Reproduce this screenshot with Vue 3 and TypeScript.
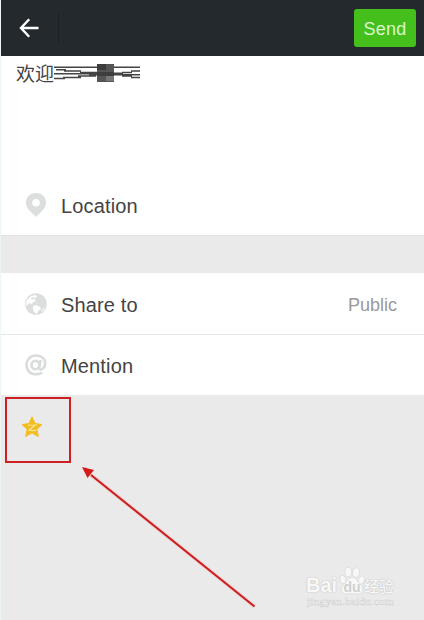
<script setup lang="ts">
import { ref } from 'vue'

const message = ref('欢迎')
const audience = ref('Public')
</script>

<template>
  <main class="screen">
    <header class="bar">
      <button class="back" aria-label="Back">
        <svg width="20" height="20" viewBox="0 0 20 20" fill="none" stroke="#fff" stroke-width="2.4">
          <path d="M10.2 1.3 2 10l8.2 8.7M2 10h17.5" />
        </svg>
      </button>
      <button class="send">Send</button>
    </header>

    <section class="composer">
      <div class="message">
        <span>{{ message }}</span>
        <svg class="scribble" width="87" height="20" viewBox="0 0 87 20">
          <g stroke="#444" stroke-width="1.5">
            <path d="M1 4.2h86M1 10.7h60" />
            <path d="M3 6.7h10M11 8h17M27 9.5h18" />
            <path d="M1 15.5h11M10 14.4h18M25 13h18M36 11.8h24" />
            <path d="M60 10.2h10M61 11.7h26M69 9.5h10M78 8h9M69 13h10M78 14.6h9" />
          </g>
          <path fill="#555" d="M44 1h17v18H44z" />
          <path fill="#3d3d3d" d="M44 1h9v6h-9zM44 9h17v4H44z" />
          <path fill="#777" d="M53 13h8v5h-8z" />
        </svg>
      </div>
      <div class="row location">
        <svg class="icon" width="24" height="26" viewBox="0 0 24 26">
          <path fill="#dcdede" fill-rule="evenodd" d="M12 1C6 1 2 5 2 10.7 2 17 8.5 21 12 25c3.5-4 10-8 10-14.3C22 5 18 1 12 1Zm0 6a3.8 3.8 0 1 1 0 7.6A3.8 3.8 0 0 1 12 7Z" />
        </svg>
        <span class="label">Location</span>
      </div>
    </section>

    <section class="options">
      <div class="row share">
        <svg class="icon" width="24" height="24" viewBox="0 0 24 24">
          <circle cx="12" cy="12" r="10.8" fill="#dcdede" />
          <path fill="#fff" d="m3 8 4-4 5-1 1 2-3 2 2 2-3 1-1 2-3-1-2 3-1-2Z" />
          <path fill="#fff" d="m9 14 3-1 4 2 1 2-3 2-1 3-3-2-1-3Z" />
          <path fill="#dcdede" d="m7 6 3-1 1 1-3 2Z" />
          <path fill="#fff" d="m19 17 2-1-2 3-2 1Z" />
        </svg>
        <span class="label">Share to</span>
        <span class="value">{{ audience }}</span>
      </div>
      <div class="row mention">
        <svg class="icon" width="24" height="24" viewBox="0 0 24 24" fill="none" stroke="#dadcdc" stroke-width="2.6">
          <ellipse cx="11.4" cy="12" rx="3.9" ry="4.2" transform="rotate(15 11.4 12)" />
          <path d="m16.6 7-1.3 7.2c-.2 2 1 2.5 2.5 2 2-.8 3.4-2.8 3.4-5.6 0-4.8-3.8-8.1-9.1-8.1-5.6 0-9.6 4-9.6 9.6 0 5.5 3.8 9.2 9.4 9.2 2.5 0 4.5-.6 6.3-1.7" />
        </svg>
        <span class="label">Mention</span>
      </div>
    </section>

    <section class="services">
      <div class="highlight">
        <svg width="24" height="24" viewBox="0 0 24 24">
          <path fill="#f3bd22" stroke="#f3bd22" stroke-width="1" stroke-linejoin="round" d="m12 1.8 3.1 6.8 6.9.9-5.1 4.8 1.5 7.2-6.4-3.6-6.4 3.6 1.5-7.2L2 9.5l6.9-.9Z" />
          <path fill="none" stroke="#ffe696" stroke-width="1.2" d="M8 10c3 .4 5.4.3 7.5 0l-6.5 5.2c3 .5 5.3.5 7.5 0" />
        </svg>
      </div>
    </section>

    <svg class="pointer" width="180" height="148" viewBox="0 0 180 148">
      <path d="m10 8 163.5 131.5" fill="none" stroke="#f5cfce" stroke-width="3.6" />
      <path d="m10 8 163.5 131.5" fill="none" stroke="#c91f20" stroke-width="2" />
      <path d="m1 0 12 3-6.5 8Z" fill="#d71919" />
    </svg>

    <div class="watermark">
      <div class="brand">
        <span class="latin">Bai</span>
        <span class="paw">
          <svg width="26" height="30" viewBox="0 0 26 30" fill="#f8f8f8" stroke="#d3d3d3" stroke-width=".6">
            <ellipse cx="3.9" cy="13.5" rx="3" ry="4.2" transform="rotate(-15 3.9 13.5)" />
            <ellipse cx="9.3" cy="6" rx="3.4" ry="4.7" />
            <ellipse cx="17.1" cy="6.5" rx="3.4" ry="4.7" transform="rotate(10 17.1 6.5)" />
            <ellipse cx="22.4" cy="14" rx="3" ry="4.2" transform="rotate(15 22.4 14)" />
            <path d="M13 11.5c4 0 5.5 4 8.5 7 4 4 2 9.5-2 9.5-3 0-9-.6-12.5 0-5 0-6-6-2-9.5 3-3 4-7 8-7Z" />
          </svg>
          <span class="du">du</span>
        </span>
        <span class="cjk">经验</span>
      </div>
      <svg class="site" width="92" height="13" viewBox="0 0 92 13">
        <text x="1" y="9" font-size="11" textLength="87" lengthAdjust="spacingAndGlyphs">jingyan.baidu.com</text>
      </svg>
    </div>
  </main>
</template>

<style>
body {
  margin: 0;
}
</style>

<style scoped>
.screen {
  position: relative;
  box-sizing: border-box;
  width: 424px;
  height: 620px;
  overflow: hidden;
  border-left: 1px solid #edf5f7;
  background: #eaeaea;
  color: #444;
  font-family: "Liberation Sans", "Noto Sans CJK SC", sans-serif;
}

button {
  border: 0;
  padding: 0;
  background: none;
}

.bar {
  display: flex;
  align-items: center;
  justify-content: space-between;
  box-sizing: border-box;
  height: 56px;
  padding-right: 8px;
  background: #23292c;
}

.back {
  display: flex;
  align-items: center;
  width: 58px;
  height: 30px;
  padding-left: 18px;
  border-right: 1px solid #1b2022;
}

.send {
  width: 62px;
  height: 38px;
  padding-top: 2px;
  border-radius: 3px;
  background: #45bf1c;
  color: #d9f8cf;
  font: 18px "Liberation Sans", sans-serif;
  letter-spacing: 0.2px;
}

.composer {
  display: flex;
  flex-direction: column;
  justify-content: space-between;
  box-sizing: border-box;
  height: 180px;
  border-bottom: 1px solid #e3e3e3;
  background: #fff;
}

.message {
  display: flex;
  height: 36px;
  padding: 6px 0 0 15px;
  font: 19px/22px "Noto Sans CJK SC", sans-serif;
}

.scribble {
  margin: 1px 0 0 -1px;
}

.row {
  display: flex;
  align-items: center;
  box-sizing: border-box;
  height: 61px;
  padding: 0 27px 0 23px;
}

.icon {
  flex: none;
}

.label {
  margin: 3px 0 0 13px;
  font-size: 20px;
  letter-spacing: 0.15px;
}

.options {
  margin-top: 37px;
  background: #fff;
}

.share {
  height: 62px;
  border-bottom: 1px solid #e4e7e7;
}

.value {
  margin: 3px 0 0 auto;
  color: #999;
  font-size: 18px;
}

.mention {
  height: 60px;
}

.services {
  padding: 2px 0 0 4px;
}

.highlight {
  box-sizing: border-box;
  width: 66px;
  height: 66px;
  padding: 16px 0 0 13px;
  border: 2px solid #ce2022;
}

.pointer {
  position: absolute;
  left: 80px;
  top: 467px;
}

.watermark {
  position: absolute;
  left: 305px;
  top: 565px;
  width: 92px;
}

.brand {
  display: flex;
  align-items: flex-end;
  height: 31px;
  color: #f8f8f8;
  font-weight: 700;
  white-space: nowrap;
  text-shadow: 0 0 1px #bcbcbc, 0 0 2px #cfcfcf;
}

.latin {
  width: 33px;
  font-size: 20px;
  line-height: 21px;
}

.paw {
  display: grid;
  width: 25px;
  height: 30px;
}

.paw > * {
  grid-area: 1 / 1;
}

.du {
  align-self: end;
  justify-self: center;
  padding-bottom: 1px;
  color: #d0d0d0;
  font-size: 14px;
  line-height: 15px;
  text-shadow: none;
}

.cjk {
  font-size: 15px;
  font-weight: 500;
  line-height: 19px;
}

.site {
  display: block;
  fill: #f6f6f6;
  stroke: #cfcfcf;
  stroke-width: 0.4;
  font-family: "Liberation Serif", serif;
}
</style>
